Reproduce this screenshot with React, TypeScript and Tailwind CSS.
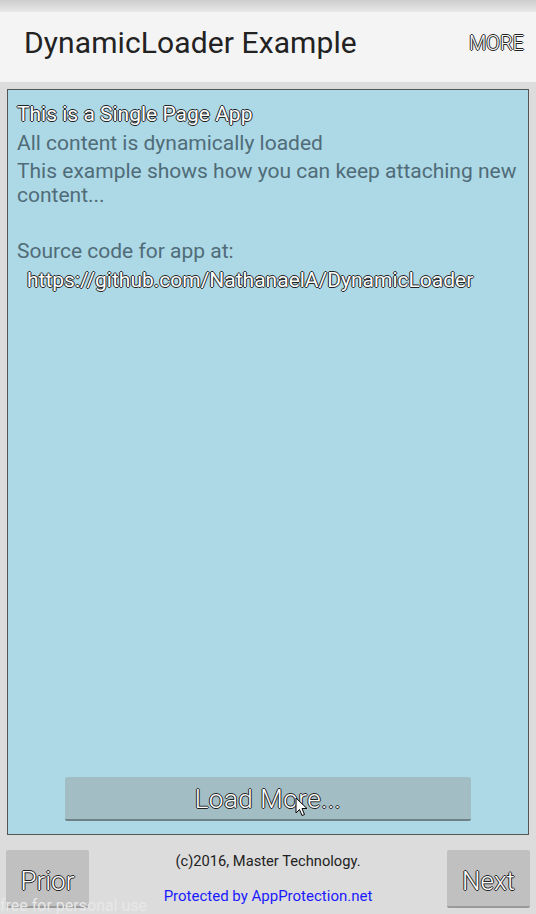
import React from "react";

const outline =
  "text-white [text-shadow:-1px_0_#222,1px_0_#222,0_-1px_#222,0_1px_#222]";

export default function App() {
  return (
    <div className="relative w-[536px] h-[914px] overflow-hidden bg-[#dcdcdc] flex flex-col [font-family:Roboto,'Liberation_Sans',sans-serif]">
      <div className="h-[12px] bg-gradient-to-b from-[#cdcdcd] to-[#e8e8e8]" />
      <div className="h-[70px] bg-[#f4f4f4] flex items-center justify-between pl-[24px] pr-[12px] pb-[9px] shrink-0">
        <div className="text-[30px] text-[#222] leading-none tracking-[0.1px]">DynamicLoader Example</div>
        <div className={`text-[20px] leading-none font-light ${outline}`}>MORE</div>
      </div>
      <div className="mx-[7px] mt-[7px] h-[746px] border border-[#555] bg-[#add8e6] flex flex-col shrink-0">
        <div className="pl-[9px] pt-[12px] flex flex-col text-[21px] leading-[24px] text-[#506c78]">
          <div className={outline}>This is a Single Page App</div>
          <div className="mt-[5px]">All content is dynamically loaded</div>
          <div className="mt-[4px]">This example shows how you can keep attaching new content...</div>
          <div className="mt-[32px]">Source code for app at:</div>
          <div className={`mt-[5px] pl-[10px] ${outline}`}>https://github.com/NathanaelA/DynamicLoader</div>
        </div>
        <div className="flex-1" />
        <div className="flex justify-center mb-[13px]">
          <div className="relative w-[406px] h-[44px] bg-[#a3bdc5] rounded-[2px] border-b-2 border-[#6e8088] flex items-center justify-center pt-[3px]">
            <span className={`text-[26px] font-light tracking-[0.5px] ${outline}`}>Load More...</span>
            <svg className="absolute left-[230px] top-[20px]" width="14" height="20" viewBox="0 0 14 20">
              <path d="M1 1 L1 16 L4.5 12.5 L7 18.5 L9.5 17.5 L7 11.5 L12 11.5 Z" fill="#fff" stroke="#000" strokeWidth="1" />
            </svg>
          </div>
        </div>
      </div>
      <div className="flex-1 flex items-start justify-between px-[6px] pt-[15px]">
        <div className="w-[83px] h-[58px] bg-[#c0c0c0] rounded-[2px] border-b-2 border-[#9a9a9a] flex items-center justify-center pt-[6px]">
          <span className={`text-[26px] font-light ${outline}`}>Prior</span>
        </div>
        <div className="flex flex-col items-center pt-[1px]">
          <div className="text-[14.7px] text-[#222] leading-[20px]">(c)2016, Master Technology.</div>
          <div className="mt-[15px] text-[15px] text-[#1a1aff] leading-[20px]">Protected by AppProtection.net</div>
        </div>
        <div className="w-[83px] h-[58px] bg-[#c0c0c0] rounded-[2px] border-b-2 border-[#9a9a9a] flex items-center justify-center pt-[6px]">
          <span className={`text-[26px] font-light ${outline}`}>Next</span>
        </div>
      </div>
      <div className="absolute left-0 bottom-[-2px] text-[16px] text-[#e8e8e8] leading-[20px]">free for personal use</div>
    </div>
  );
}
